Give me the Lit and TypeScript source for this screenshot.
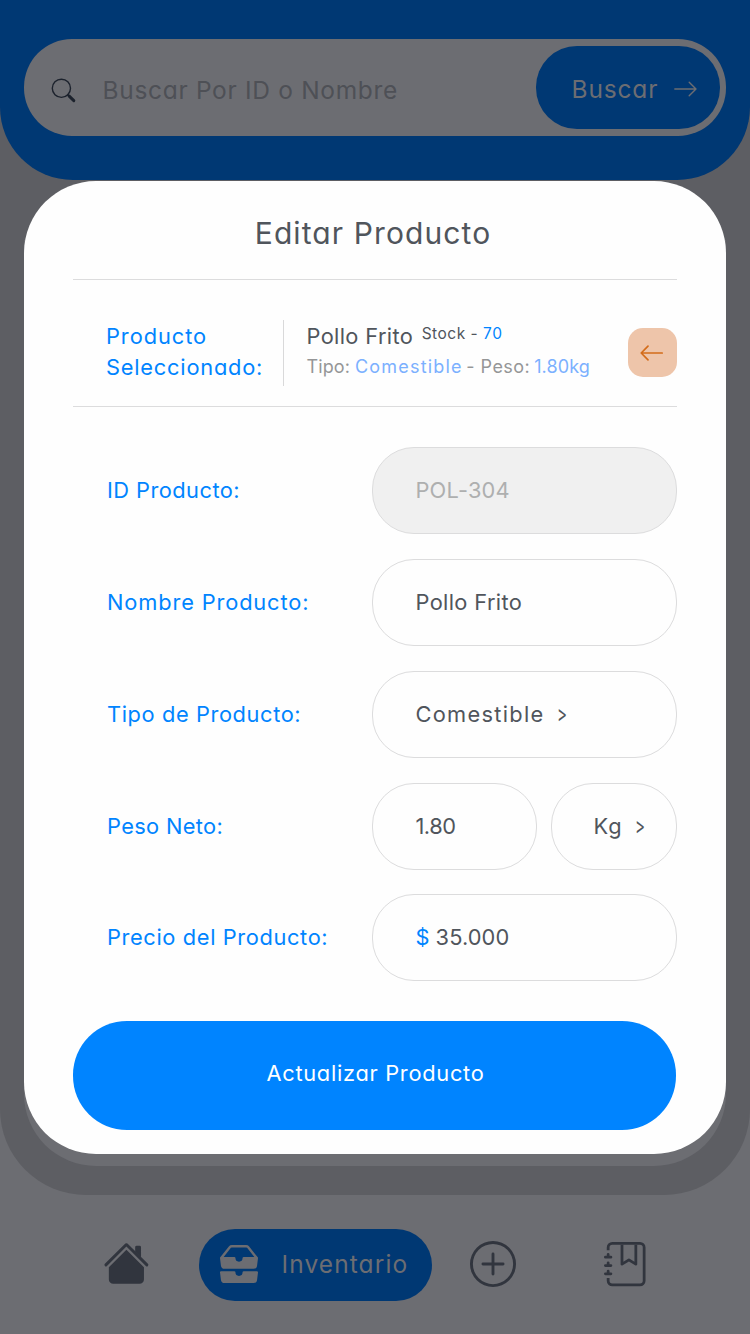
import { LitElement, html, css, svg } from "lit";
import { customElement } from "lit/decorators.js";

const icon = (cls: string, box: string, body: unknown) =>
  html`<svg class=${cls} viewBox=${box} fill="currentColor" aria-hidden="true">${body}</svg>`;

const house = svg`<path d="m8 3.293 6 6V13.5a1.5 1.5 0 0 1-1.5 1.5h-9A1.5 1.5 0 0 1 2 13.5V9.293l6-6zm5-.793V6l-2-2V2.5a.5.5 0 0 1 .5-.5h1a.5.5 0 0 1 .5.5z"/><path d="M7.293 1.5a1 1 0 0 1 1.414 0l6.647 6.646a.5.5 0 0 1-.708.708L8 2.207 1.354 8.854a.5.5 0 1 1-.708-.708L7.293 1.5z"/>`;
const inboxes = svg`<path d="M4.98 1a.5.5 0 0 0-.39.188L1.54 5H6a.5.5 0 0 1 .5.5 1.5 1.5 0 0 0 3 0A.5.5 0 0 1 10 5h4.46l-3.05-3.812A.5.5 0 0 0 11.02 1H4.98zM3.81.563A1.5 1.5 0 0 1 4.98 0h6.04a1.5 1.5 0 0 1 1.17.563l3.7 4.625a.5.5 0 0 1 .106.374l-.39 3.124A1.5 1.5 0 0 1 14.117 10H1.883A1.5 1.5 0 0 1 .394 8.686l-.39-3.124a.5.5 0 0 1 .106-.374L3.81.563zM.125 11.17A.5.5 0 0 1 .5 11H6a.5.5 0 0 1 .5.5 1.5 1.5 0 0 0 3 0 .5.5 0 0 1 .5-.5h5.5a.5.5 0 0 1 .496.562l-.39 3.124A1.5 1.5 0 0 1 14.117 16H1.883a1.5 1.5 0 0 1-1.489-1.314l-.39-3.124a.5.5 0 0 1 .121-.393z"/>`;
const plusCircle = svg`<path d="M8 15A7 7 0 1 1 8 1a7 7 0 0 1 0 14m0 1A8 8 0 1 0 8 0a8 8 0 0 0 0 16"/><path d="M8 4a.5.5 0 0 1 .5.5v3h3a.5.5 0 0 1 0 1h-3v3a.5.5 0 0 1-1 0v-3h-3a.5.5 0 0 1 0-1h3v-3A.5.5 0 0 1 8 4"/>`;
const journal = svg`<path d="M6 8V1h1v6.117L8.743 6.07a.5.5 0 0 1 .514 0L11 7.117V1h1v7a.5.5 0 0 1-.757.429L9 7.083 6.757 8.43A.5.5 0 0 1 6 8z"/><path d="M3 0h10a2 2 0 0 1 2 2v12a2 2 0 0 1-2 2H3a2 2 0 0 1-2-2v-1h1v1a1 1 0 0 0 1 1h10a1 1 0 0 0 1-1V2a1 1 0 0 0-1-1H3a1 1 0 0 0-1 1v1H1V2a2 2 0 0 1 2-2z"/><path d="M1 5v-.5a.5.5 0 0 1 1 0V5h.5a.5.5 0 0 1 0 1h-2a.5.5 0 0 1 0-1H1zm0 3v-.5a.5.5 0 0 1 1 0V8h.5a.5.5 0 0 1 0 1h-2a.5.5 0 0 1 0-1H1zm0 3v-.5a.5.5 0 0 1 1 0v.5h.5a.5.5 0 0 1 0 1h-2a.5.5 0 0 1 0-1H1z"/>`;
const magnifier = svg`<g fill="none" stroke="currentColor" stroke-linecap="round"><circle cx="10.4" cy="10.3" r="9.1" stroke-width="1.4"/><path d="M16.8 16.8l1.6 1.6" stroke-width="1.8"/><path d="M18.2 18.2l4.6 4.4" stroke-width="3"/></g>`;
const arrowRight = svg`<path d="M.8 8h21M15.2 1.2L22 8l-6.8 6.8" fill="none" stroke="currentColor" stroke-width="1.4" stroke-linecap="round" stroke-linejoin="round"/>`;
const arrowLeft = svg`<path d="M22.2 8H1.4M8 1.2L1.2 8L8 14.8" fill="none" stroke="currentColor" stroke-width="1.7" stroke-linecap="round" stroke-linejoin="round"/>`;

@customElement("app-root")
export class AppRoot extends LitElement {
  static styles = css`
    :host {
      display: block;
      position: relative;
      width: 750px;
      height: 1334px;
      overflow: hidden;
      background: #6c6d72;
      color: #50555c;
      font-family: Inter, "Open Sans", sans-serif;
      font-weight: 400;
      font-feature-settings: "cv11";
      font-size: 21.8px;
      white-space: nowrap;
    }
    * { box-sizing: border-box; }
    svg { display: block; flex: none; overflow: visible; }

    .page { height: 1195px; background: #5d5e63; border-radius: 0 0 86px 86px; display: flex; flex-direction: column; }
    .top { height: 180px; flex: none; padding: 39px 24px 0; background: #003873; border-radius: 0 0 73px 73px; }
    .search { height: 97px; border-radius: 48px; background: #6c6d72; display: flex; align-items: center; padding: 0 6px 0 27px; font-size: 24.5px; }
    .magnifier { width: 25px; height: 24px; color: #1c222d; margin-top: 5px; }
    .placeholder { flex: 1; margin: 4px 0 0 26.5px; color: #4e5056; letter-spacing: .69px; }
    .find { width: 184px; height: 83px; border-radius: 41px; background: #003873; color: #6c6d72; display: flex; align-items: center; padding: 2px 0 0 35.5px; letter-spacing: .85px; }
    .find .arrow { margin: 1px 0 0 15.5px; }
    .arrow { width: 23px; height: 16px; }
    .sheet { margin: 60px 24px 29px; flex: 1; background: #6c6d72; border-radius: 0 0 72px 72px; }

    .nav { height: 139px; display: flex; align-items: center; padding-left: 102.5px; color: #31353e; }
    .house { width: 46.8px; height: 46.8px; margin-bottom: 3px; }
    .active { width: 233px; height: 72px; margin: 1px 38px 0 49.7px; border-radius: 36px; background: #003873; color: #6c6d72; display: flex; align-items: center; padding-left: 21px; font-size: 24.5px; letter-spacing: 1.1px; }
    .active span { margin-bottom: 2px; }
    .inboxes { width: 38px; height: 38px; margin: 0 23.5px 2px 0; }
    .plus { width: 46px; height: 46px; margin: 0 88px 1px 0; }
    .journal { width: 44.3px; height: 44.3px; margin-bottom: 1px; }

    .modal { position: absolute; top: 181px; left: 24px; width: 702px; height: 973px; padding: 0 49px; background: #fefefe; border-radius: 72px; display: flex; flex-direction: column; }
    .title { margin: 0; height: 99px; flex: none; border-bottom: 1px solid #dcdcdd; padding: 5px 4px 0 0; display: flex; align-items: center; justify-content: center; font-size: 30px; font-weight: 400; letter-spacing: 1.1px; }
    .selected { height: 127px; flex: none; border-bottom: 1px solid #dcdcdd; display: flex; align-items: flex-start; padding: 40px 0 0 33px; }
    .caption { width: 178px; height: 66px; border-right: 1px solid #d9d9da; color: #0084ff; line-height: 31px; padding-top: 1px; letter-spacing: .79px; }
    .first { display: block; letter-spacing: .95px; }
    .info { flex: 1; padding-left: 22.5px; display: flex; flex-direction: column; height: 66px; }
    .name { height: 31px; display: flex; align-items: center; letter-spacing: .36px; padding-top: 1px; }
    .stock { font-size: 15.5px; margin: -6px 0 0 8.5px; letter-spacing: .5px; }
    .blue { color: #0084ff; }
    .count { letter-spacing: .7px; }
    .meta { height: 30px; display: flex; align-items: center; font-size: 18px; color: #959697; gap: 5px; }
    .kind { letter-spacing: .1px; }
    .soft { color: #7bb0ff; }
    .food { letter-spacing: 1.2px; }
    .weigh { letter-spacing: .45px; margin-left: -1.5px; }
    .kilos { letter-spacing: .1px; margin-left: -1px; }
    .back { width: 49px; height: 49px; margin-top: 8px; border-radius: 15px; background: #eec5aa; color: #d36c1a; display: grid; place-items: center; }
    .back .arrow { margin: 1px 0 0 -3px; }

    .form { display: flex; flex-direction: column; gap: 25px; padding-top: 40px; }
    .row { display: grid; grid-template-columns: 265px 305px; height: 87px; padding-left: 34px; align-items: center; }
    .row:last-child { margin-top: -1px; }
    .label { color: #0084ff; padding-bottom: 1px; }
    .field { height: 87px; border: 1px solid #dcdcdd; border-radius: 42px; display: flex; align-items: center; padding: 0 0 1px 42.5px; }
    .off { background: #f0f0f0; color: #aeafaf; letter-spacing: .2px; }
    .pair { display: grid; grid-template-columns: 165px 126px; gap: 14px; }
    .l1 { letter-spacing: .46px; }
    .l2 { letter-spacing: .87px; }
    .l3 { letter-spacing: .61px; }
    .l4 { letter-spacing: .35px; }
    .l5 { letter-spacing: .63px; }
    .v2 { letter-spacing: .36px; }
    .v3 { letter-spacing: 1.3px; }
    .v4 { letter-spacing: -.5px; }
    .v5 { letter-spacing: .1px; }
    .unit { letter-spacing: 1px; padding-left: 41.5px; }
    .gt { display: inline-block; font-size: 18px; font-weight: 400; letter-spacing: 0; transform: scale(.84, 1.3); margin: 0 0 2px 11.5px; }
    .cash { margin-right: 6px; }
    .submit { height: 109px; width: 603px; margin-top: 40px; flex: none; border-radius: 54px; background: #0084ff; color: #fff; display: flex; align-items: center; justify-content: center; padding: 0 0 5px 2px; letter-spacing: .72px; }
  `;

  render() {
    return html`
      <div class="page">
        <div class="top">
          <div class="search">
            ${icon("magnifier", "0 0 25 24", magnifier)}
            <span class="placeholder">Buscar Por ID o Nombre</span>
            <div class="find"><span>Buscar</span>${icon("arrow", "0 0 23 16", arrowRight)}</div>
          </div>
        </div>
        <div class="sheet"></div>
      </div>
      <div class="nav">
        ${icon("house", "0 0 16 16", house)}
        <div class="active">${icon("inboxes", "0 0 16 16", inboxes)}<span>Inventario</span></div>
        ${icon("plus", "0 0 16 16", plusCircle)}
        ${icon("journal", "0 0 16 16", journal)}
      </div>

      <div class="modal" role="dialog">
        <h1 class="title">Editar Producto</h1>
        <div class="selected">
          <div class="caption"><span class="first">Producto</span>Seleccionado:</div>
          <div class="info">
            <div class="name">Pollo Frito<span class="stock">Stock - <span class="blue count">70</span></span></div>
            <div class="meta">
              <span class="kind">Tipo:</span><span class="soft food">Comestible</span>
              <span class="weigh">- Peso:</span><span class="soft kilos">1.80kg</span>
            </div>
          </div>
          <div class="back">${icon("arrow", "0 0 23 16", arrowLeft)}</div>
        </div>
        <div class="form">
          <div class="row"><span class="label l1">ID Producto:</span><div class="field off">POL-304</div></div>
          <div class="row"><span class="label l2">Nombre Producto:</span><div class="field v2">Pollo Frito</div></div>
          <div class="row"><span class="label l3">Tipo de Producto:</span><div class="field v3">Comestible<span class="gt">&gt;</span></div></div>
          <div class="row"><span class="label l4">Peso Neto:</span>
            <div class="pair"><div class="field v4">1.80</div><div class="field unit">Kg<span class="gt">&gt;</span></div></div>
          </div>
          <div class="row"><span class="label l5">Precio del Producto:</span><div class="field v5"><span class="blue cash">$</span>35.000</div></div>
        </div>
        <div class="submit">Actualizar Producto</div>
      </div>
    `;
  }
}
